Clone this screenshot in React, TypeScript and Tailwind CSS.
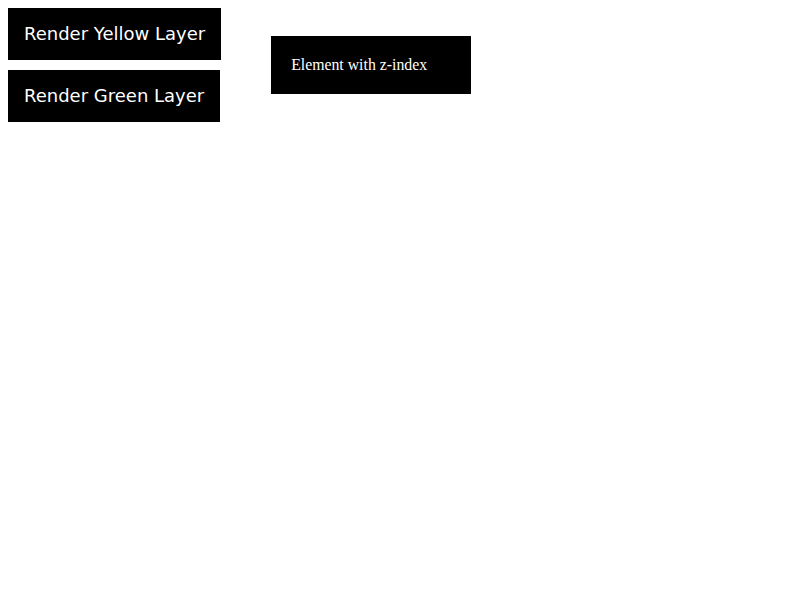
export default function App() {
  return (
    <div className="flex items-start bg-white min-h-[600px] p-2">
      <div className="flex flex-col items-start gap-[10px]">
        <button className="bg-black text-white px-4 pb-[1px] h-[52px] text-[18px] font-['DejaVu_Sans',sans-serif]">
          Render Yellow Layer
        </button>
        <button className="bg-black text-white px-4 pb-[1px] h-[52px] text-[18px] font-['DejaVu_Sans',sans-serif]">
          Render Green Layer
        </button>
      </div>
      <div className="ml-[50px] mt-[28px] w-[200px] h-[58px] bg-black text-white px-5 flex items-center text-[15.8px] font-['Liberation_Serif',serif]">
        Element with z-index
      </div>
    </div>
  );
}
